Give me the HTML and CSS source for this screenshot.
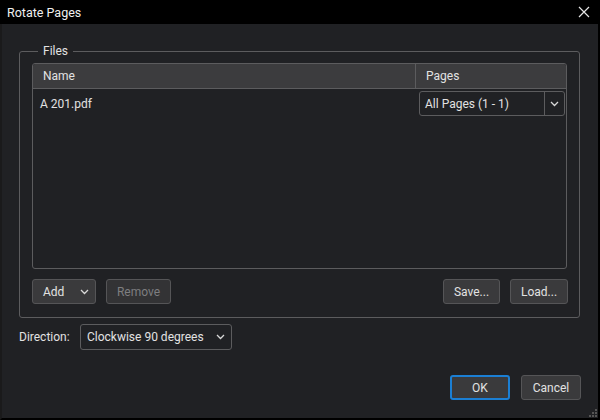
FILE: index.html
```
<!DOCTYPE html>
<html lang="en">
<head>
    <meta charset="UTF-8">
    <title>Rotate Pages</title>
    <link rel="stylesheet" href="styles.css">
</head>
<body>
    <div class="dialog">
        <div class="titlebar">
            <span class="title">Rotate Pages</span>
            <svg class="close" width="12" height="12" viewBox="0 0 12 12">
                <path d="M1 1 L11 11 M11 1 L1 11" stroke="#e6e6e6" stroke-width="1.2" fill="none"/>
            </svg>
        </div>
        <div class="content">
            <fieldset class="files">
                <legend>Files</legend>
                <div class="file-table">
                    <div class="table-head">
                        <div class="col-name">Name</div>
                        <div class="col-pages">Pages</div>
                    </div>
                    <div class="table-row">
                        <div class="col-name">A 201.pdf</div>
                        <div class="col-pages">
                            <div class="combo page-combo">
                                <span class="combo-text">All Pages (1 - 1)</span>
                                <span class="combo-arrow">
                                    <svg width="9" height="6" viewBox="0 0 9 6"><path d="M1 1 L4.5 4.5 L8 1" stroke="#d8d8d8" stroke-width="1.3" fill="none"/></svg>
                                </span>
                            </div>
                        </div>
                    </div>
                </div>
                <div class="file-buttons">
                    <button class="btn add-btn">Add
                        <svg width="9" height="6" viewBox="0 0 9 6"><path d="M1 1 L4.5 4.5 L8 1" stroke="#d8d8d8" stroke-width="1.3" fill="none"/></svg>
                    </button>
                    <button class="btn remove-btn" disabled>Remove</button>
                    <span class="spacer"></span>
                    <button class="btn save-btn">Save...</button>
                    <button class="btn load-btn">Load...</button>
                </div>
            </fieldset>

            <div class="direction-row">
                <label>Direction:</label>
                <div class="combo direction-combo">
                    <span class="combo-text">Clockwise 90 degrees</span>
                    <svg width="9" height="6" viewBox="0 0 9 6"><path d="M1 1 L4.5 4.5 L8 1" stroke="#d8d8d8" stroke-width="1.3" fill="none"/></svg>
                </div>
            </div>

            <div class="dialog-buttons">
                <button class="btn ok-btn">OK</button>
                <button class="btn cancel-btn">Cancel</button>
            </div>

            <svg class="grip" width="9" height="9" viewBox="0 0 9 9">
                <rect x="7" y="1" width="2" height="2" fill="#555"/>
                <rect x="4" y="4" width="2" height="2" fill="#555"/>
                <rect x="7" y="4" width="2" height="2" fill="#555"/>
                <rect x="1" y="7" width="2" height="2" fill="#555"/>
                <rect x="4" y="7" width="2" height="2" fill="#555"/>
                <rect x="7" y="7" width="2" height="2" fill="#555"/>
            </svg>
        </div>
    </div>
</body>
</html>
```
FILE: styles.css
```
body {
    margin: 0;
    font-family: Roboto, "Liberation Sans", sans-serif;
    font-size: 12px;
    color: #e2e2e2;
    background-color: #000;
}

.dialog {
    width: 600px;
    height: 420px;
    display: flex;
    flex-direction: column;
}

.titlebar {
    height: 24px;
    background-color: #000;
    display: flex;
    align-items: center;
    justify-content: space-between;
    padding: 0 10px 0 7px;
}

.title {
    font-size: 12.5px;
    color: #f0f0f0;
}

.content {
    flex: 1;
    position: relative;
    display: flex;
    flex-direction: column;
    background-color: #202124;
    border-left: 2px solid #1a1a1b;
    border-right: 2px solid #000;
    border-bottom: 2px solid #000;
    padding: 20px 18px 0 17px;
}

.files {
    margin: 0;
    padding: 5px 12px 13px 12px;
    border: 1px solid #5c5c5e;
    border-radius: 3px;
}

.files legend {
    padding: 0 5px;
    margin-left: 6px;
    font-size: 12px;
    line-height: 14px;
}

.file-table {
    height: 204px;
    border: 1px solid #5c5c5e;
    border-radius: 3px;
    overflow: hidden;
}

.table-head {
    display: flex;
    height: 24px;
    background-color: #3c3c3e;
    border-bottom: 1px solid #5c5c5e;
}

.table-head > div {
    display: flex;
    align-items: center;
    padding-left: 10px;
}

.table-head .col-name {
    border-right: 1px solid #5c5c5e;
}

.col-name {
    width: 372px;
}

.col-pages {
    flex: 1;
}

.table-row {
    display: flex;
    height: 29px;
    align-items: center;
}

.table-row .col-name {
    padding-left: 7px;
    width: 379px;
}

.combo {
    display: flex;
    align-items: center;
    height: 23px;
    border: 1px solid #5c5c5e;
    border-radius: 3px;
    background-color: #202124;
}

.page-combo {
    width: 144px;
}

.page-combo .combo-text {
    flex: 1;
    padding-left: 5px;
}

.combo-arrow {
    width: 19px;
    height: 23px;
    border-left: 1px solid #5c5c5e;
    display: flex;
    align-items: center;
    justify-content: center;
}

.file-buttons {
    display: flex;
    gap: 10px;
    margin-top: 10px;
    margin-right: -1px;
}

.spacer {
    flex: 1;
}

.btn {
    height: 25px;
    font-family: Roboto, "Liberation Sans", sans-serif;
    font-size: 12px;
    color: #e2e2e2;
    background-color: #3a3a3c;
    border: 1px solid #555557;
    border-radius: 3px;
    padding: 0;
}

.add-btn {
    width: 64px;
    display: flex;
    align-items: center;
    justify-content: space-between;
    padding: 0 6px 0 10px;
}

.remove-btn {
    width: 65px;
    color: #7e7e80;
    background-color: #333335;
}

.save-btn {
    width: 57px;
}

.load-btn {
    width: 58px;
}

.direction-row {
    display: flex;
    align-items: center;
    margin-top: 6px;
}

.direction-row label {
    width: 61px;
}

.direction-combo {
    width: 138px;
    height: 24px;
    padding: 0 6px;
    justify-content: space-between;
}

.dialog-buttons {
    display: flex;
    justify-content: flex-end;
    gap: 11px;
    margin-top: auto;
    margin-bottom: 18px;
    margin-right: -1px;
}

.ok-btn {
    width: 60px;
    height: 25px;
    border: 2px solid #1b7fd4;
}

.cancel-btn {
    width: 60px;
    height: 25px;
}

.grip {
    position: absolute;
    right: 1px;
    bottom: 1px;
}
```
